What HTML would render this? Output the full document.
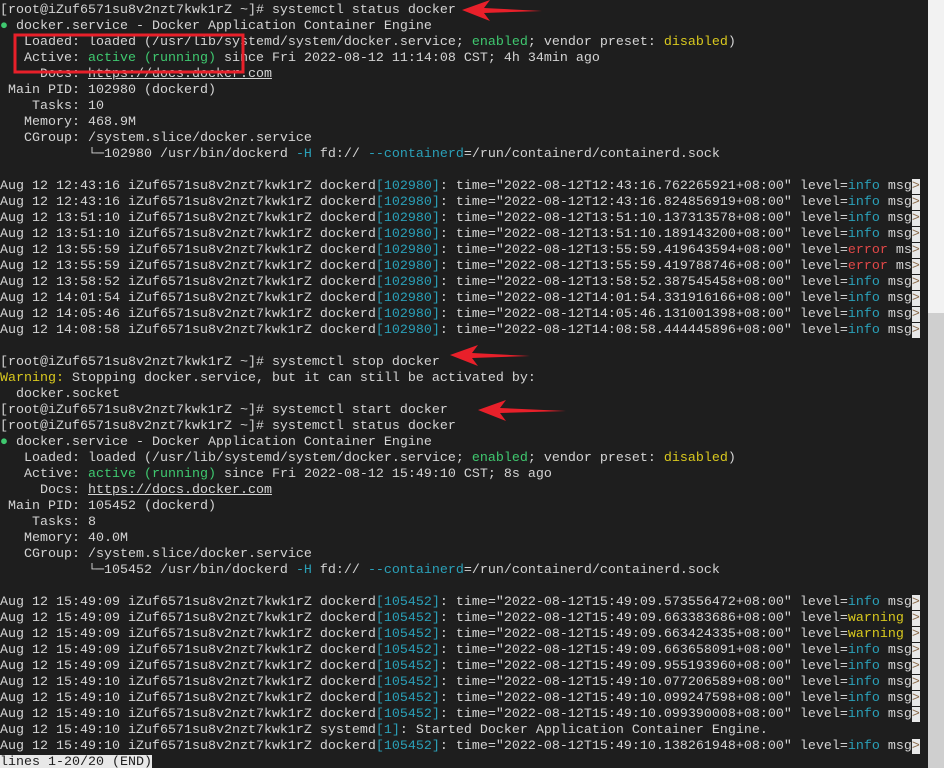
<!DOCTYPE html>
<html><head><meta charset="utf-8">
<style>
html,body{margin:0;padding:0;background:#1e1e1e;width:944px;height:768px;overflow:hidden}
#t{position:absolute;left:0;top:3px;width:928px;height:765px;font-family:"Liberation Mono","DejaVu Sans Mono",monospace;font-size:13.33px;line-height:16px;color:#d4d4d4;overflow:hidden}
.l{height:16px;overflow:hidden;white-space:pre}
.g{color:#3fc86f}.c{color:#2aa0b8}.y{color:#d9c91e}.r{color:#e24848}.u{text-decoration:underline}
.m{background:#e8e8e8;color:#8a6a4a}
.rv{background:#e8e8e8;color:#1e1e1e}
#sb1{position:absolute;left:928px;top:0;width:16px;height:313px;background:#f2f2f2}
#sb2{position:absolute;left:928px;top:313px;width:16px;height:455px;background:#cfcfcf}
svg{position:absolute;left:0;top:0}
</style></head><body>
<div id="sb1"></div><div id="sb2"></div>
<div id="t"><div class="l">[root@iZuf6571su8v2nzt7kwk1rZ ~]# systemctl status docker</div><div class="l"><span class="g">●</span> docker.service - Docker Application Container Engine</div><div class="l">   Loaded: loaded (/usr/lib/systemd/system/docker.service; <span class="g">enabled</span>; vendor preset: <span class="y">disabled</span>)</div><div class="l">   Active: <span class="g">active (running)</span> since Fri 2022-08-12 11:14:08 CST; 4h 34min ago</div><div class="l">     Docs: <span class="u">https://docs.docker.com</span></div><div class="l"> Main PID: 102980 (dockerd)</div><div class="l">    Tasks: 10</div><div class="l">   Memory: 468.9M</div><div class="l">   CGroup: /system.slice/docker.service</div><div class="l">           └─102980 /usr/bin/dockerd <span class="c">-H</span> fd:// <span class="c">--containerd</span>=/run/containerd/containerd.sock</div><div class="l"> </div><div class="l">Aug 12 12:43:16 iZuf6571su8v2nzt7kwk1rZ dockerd<span class="c">[102980]</span>: time="2022-08-12T12:43:16.762265921+08:00" level=<span class="c">info</span> msg<span class="m">&gt;</span></div><div class="l">Aug 12 12:43:16 iZuf6571su8v2nzt7kwk1rZ dockerd<span class="c">[102980]</span>: time="2022-08-12T12:43:16.824856919+08:00" level=<span class="c">info</span> msg<span class="m">&gt;</span></div><div class="l">Aug 12 13:51:10 iZuf6571su8v2nzt7kwk1rZ dockerd<span class="c">[102980]</span>: time="2022-08-12T13:51:10.137313578+08:00" level=<span class="c">info</span> msg<span class="m">&gt;</span></div><div class="l">Aug 12 13:51:10 iZuf6571su8v2nzt7kwk1rZ dockerd<span class="c">[102980]</span>: time="2022-08-12T13:51:10.189143200+08:00" level=<span class="c">info</span> msg<span class="m">&gt;</span></div><div class="l">Aug 12 13:55:59 iZuf6571su8v2nzt7kwk1rZ dockerd<span class="c">[102980]</span>: time="2022-08-12T13:55:59.419643594+08:00" level=<span class="r">error</span> ms<span class="m">&gt;</span></div><div class="l">Aug 12 13:55:59 iZuf6571su8v2nzt7kwk1rZ dockerd<span class="c">[102980]</span>: time="2022-08-12T13:55:59.419788746+08:00" level=<span class="r">error</span> ms<span class="m">&gt;</span></div><div class="l">Aug 12 13:58:52 iZuf6571su8v2nzt7kwk1rZ dockerd<span class="c">[102980]</span>: time="2022-08-12T13:58:52.387545458+08:00" level=<span class="c">info</span> msg<span class="m">&gt;</span></div><div class="l">Aug 12 14:01:54 iZuf6571su8v2nzt7kwk1rZ dockerd<span class="c">[102980]</span>: time="2022-08-12T14:01:54.331916166+08:00" level=<span class="c">info</span> msg<span class="m">&gt;</span></div><div class="l">Aug 12 14:05:46 iZuf6571su8v2nzt7kwk1rZ dockerd<span class="c">[102980]</span>: time="2022-08-12T14:05:46.131001398+08:00" level=<span class="c">info</span> msg<span class="m">&gt;</span></div><div class="l">Aug 12 14:08:58 iZuf6571su8v2nzt7kwk1rZ dockerd<span class="c">[102980]</span>: time="2022-08-12T14:08:58.444445896+08:00" level=<span class="c">info</span> msg<span class="m">&gt;</span></div><div class="l"> </div><div class="l">[root@iZuf6571su8v2nzt7kwk1rZ ~]# systemctl stop docker</div><div class="l"><span class="y">Warning:</span> Stopping docker.service, but it can still be activated by:</div><div class="l">  docker.socket</div><div class="l">[root@iZuf6571su8v2nzt7kwk1rZ ~]# systemctl start docker</div><div class="l">[root@iZuf6571su8v2nzt7kwk1rZ ~]# systemctl status docker</div><div class="l"><span class="g">●</span> docker.service - Docker Application Container Engine</div><div class="l">   Loaded: loaded (/usr/lib/systemd/system/docker.service; <span class="g">enabled</span>; vendor preset: <span class="y">disabled</span>)</div><div class="l">   Active: <span class="g">active (running)</span> since Fri 2022-08-12 15:49:10 CST; 8s ago</div><div class="l">     Docs: <span class="u">https://docs.docker.com</span></div><div class="l"> Main PID: 105452 (dockerd)</div><div class="l">    Tasks: 8</div><div class="l">   Memory: 40.0M</div><div class="l">   CGroup: /system.slice/docker.service</div><div class="l">           └─105452 /usr/bin/dockerd <span class="c">-H</span> fd:// <span class="c">--containerd</span>=/run/containerd/containerd.sock</div><div class="l"> </div><div class="l">Aug 12 15:49:09 iZuf6571su8v2nzt7kwk1rZ dockerd<span class="c">[105452]</span>: time="2022-08-12T15:49:09.573556472+08:00" level=<span class="c">info</span> msg<span class="m">&gt;</span></div><div class="l">Aug 12 15:49:09 iZuf6571su8v2nzt7kwk1rZ dockerd<span class="c">[105452]</span>: time="2022-08-12T15:49:09.663383686+08:00" level=<span class="y">warning</span> <span class="m">&gt;</span></div><div class="l">Aug 12 15:49:09 iZuf6571su8v2nzt7kwk1rZ dockerd<span class="c">[105452]</span>: time="2022-08-12T15:49:09.663424335+08:00" level=<span class="y">warning</span> <span class="m">&gt;</span></div><div class="l">Aug 12 15:49:09 iZuf6571su8v2nzt7kwk1rZ dockerd<span class="c">[105452]</span>: time="2022-08-12T15:49:09.663658091+08:00" level=<span class="c">info</span> msg<span class="m">&gt;</span></div><div class="l">Aug 12 15:49:09 iZuf6571su8v2nzt7kwk1rZ dockerd<span class="c">[105452]</span>: time="2022-08-12T15:49:09.955193960+08:00" level=<span class="c">info</span> msg<span class="m">&gt;</span></div><div class="l">Aug 12 15:49:10 iZuf6571su8v2nzt7kwk1rZ dockerd<span class="c">[105452]</span>: time="2022-08-12T15:49:10.077206589+08:00" level=<span class="c">info</span> msg<span class="m">&gt;</span></div><div class="l">Aug 12 15:49:10 iZuf6571su8v2nzt7kwk1rZ dockerd<span class="c">[105452]</span>: time="2022-08-12T15:49:10.099247598+08:00" level=<span class="c">info</span> msg<span class="m">&gt;</span></div><div class="l">Aug 12 15:49:10 iZuf6571su8v2nzt7kwk1rZ dockerd<span class="c">[105452]</span>: time="2022-08-12T15:49:10.099390008+08:00" level=<span class="c">info</span> msg<span class="m">&gt;</span></div><div class="l">Aug 12 15:49:10 iZuf6571su8v2nzt7kwk1rZ systemd<span class="c">[1]</span>: Started Docker Application Container Engine.</div><div class="l">Aug 12 15:49:10 iZuf6571su8v2nzt7kwk1rZ dockerd<span class="c">[105452]</span>: time="2022-08-12T15:49:10.138261948+08:00" level=<span class="c">info</span> msg<span class="m">&gt;</span></div><div class="l"><span class="rv">lines 1-20/20 (END)</span></div></div>
<svg width="944" height="768" viewBox="0 0 944 768">
<rect x="15" y="35" width="228" height="37" fill="none" stroke="#e8202a" stroke-width="3"/>
<g fill="#e8202a">
<polygon points="462,10 490,0 484,8 542,11 484,13 490,21"/>
<polygon points="450,355 478,345 472,353 530,356 472,358 478,366"/>
<polygon points="478,410 506,400 500,408 566,411 500,413 506,421"/>
</g>
</svg>
</body></html>
